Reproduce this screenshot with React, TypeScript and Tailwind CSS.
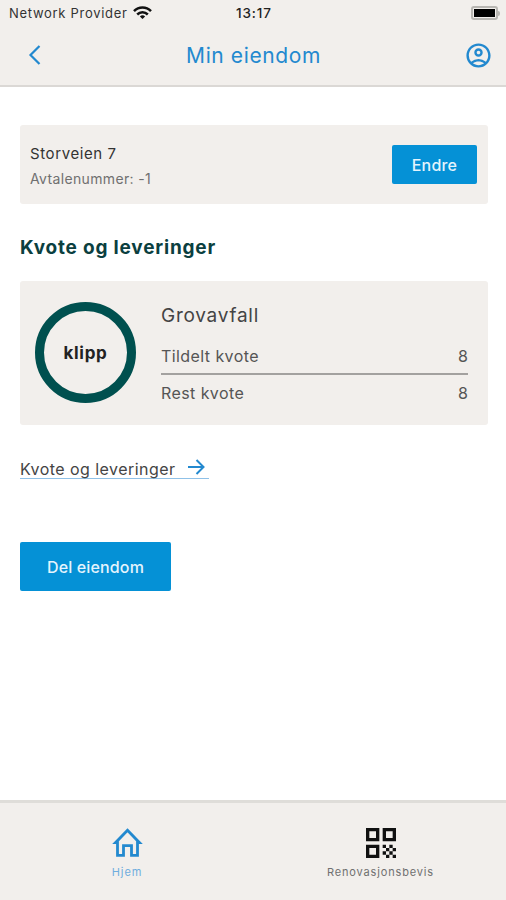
import { MdOutlineAccountCircle, MdQrCode } from "react-icons/md";

const StatusBar = () => {
  return (
    <div className="grid h-[28px] grid-cols-3 items-center pl-[9px] pr-[6px] text-[13px] text-[#333]">
      <div className="flex items-center gap-[5px]">
        <span className="whitespace-nowrap tracking-[0.7px]">Network Provider</span>
        <svg viewBox="0 0 19 13" className="mb-[3px] h-[13px] w-[19px] shrink-0" fill="none" stroke="#111" strokeWidth="2.5">
          <path d="M1 5.1C5.8.2 13.2.2 18 5.1" />
          <path d="M4.2 8.5c3-3 7.6-3 10.6 0" />
          <path d="M9.5 13 6.9 10.4c1.5-1.4 3.7-1.4 5.2 0z" fill="#111" stroke="none" />
        </svg>
      </div>
      <span className="pb-[2px] pr-px text-center text-[13.5px] font-medium tracking-[0.9px] text-[#222]">13:17</span>
      <div className="mb-[2px] flex items-center justify-end">
        <div className="h-[14px] w-[27px] rounded-[3px] border-2 border-[#b8b6b2] p-px">
          <div className="h-full bg-black"></div>
        </div>
        <div className="h-[5px] w-[2px] rounded-r-full bg-[#b8b6b2]"></div>
      </div>
    </div>
  );
};

const Header = () => {
  return (
    <header className="h-[87px] border-b-2 border-[#dbd8d5] bg-[#f2efec]">
      <StatusBar />
      <div className="flex h-[54px] items-center justify-between pl-[28px] pr-[13px] text-[#2389cf]">
        <svg viewBox="0 0 13 20" className="h-5 w-[13px]" fill="none" stroke="currentColor" strokeWidth="2.2">
          <path d="M11.5 1 2.5 10l9 9" />
        </svg>
        <h1 className="pl-[2px] pt-px text-[21px] tracking-[0.6px]">Min eiendom</h1>
        <MdOutlineAccountCircle className="h-[29px] w-[29px]" />
      </div>
    </header>
  );
};

const QuotaRow = ({ label, value }: { label: string; value: number }) => {
  return (
    <div className="flex justify-between text-base leading-6 text-[#555]">
      <span className="tracking-[0.42px]">{label}</span>
      <span>{value}</span>
    </div>
  );
};

const App = () => {
  return (
    <div className="flex h-[900px] w-[506px] flex-col overflow-hidden bg-white font-['Inter',sans-serif]">
      <Header />
      <main className="flex flex-1 flex-col items-start px-5 pr-[18px] pt-[38px]">
        <section className="flex h-[79px] w-full items-center justify-between rounded-[3px] bg-[#f2efec] pl-[10px] pr-[11px]">
          <div className="pt-[2px]">
            <p className="text-[15px] leading-[25px] tracking-[0.6px] text-[#333]">Storveien 7</p>
            <p className="text-[14px] leading-[25px] tracking-[0.35px] text-[#707070]">Avtalenummer: -1</p>
          </div>
          <button className="h-[39px] w-[85px] rounded-[2px] bg-[#0591d6] text-base font-medium tracking-[0.2px] text-[#e4f4fd]">
            Endre
          </button>
        </section>

        <h2 className="mt-[30px] text-[19px] font-bold leading-7 tracking-[0.8px] text-[#0b3f40]">
          Kvote og leveringer
        </h2>

        <section className="mt-[19px] flex h-[144px] w-full rounded-[3px] bg-[#f2efec] pl-[15px] pr-5">
          <div className="mt-[21px] flex h-[101px] w-[101px] shrink-0 items-center justify-center rounded-full border-[9px] border-[#00504f] pt-[2px] text-[17px] font-bold tracking-[0.7px] text-[#222]">
            klipp
          </div>
          <div className="ml-[25px] flex-1 pt-[21px]">
            <h3 className="text-[19px] leading-7 tracking-[0.75px] text-[#444]">Grovavfall</h3>
            <div className="mt-[14px] border-b-2 border-[#a3a19f] pb-[5px]">
              <QuotaRow label="Tildelt kvote" value={8} />
            </div>
            <div className="mt-[6px]">
              <QuotaRow label="Rest kvote" value={8} />
            </div>
          </div>
        </section>

        <a className="mt-[31px] flex h-[23px] items-center gap-[13px] border-b border-[#8fc1e8] pr-1">
          <span className="mt-[3px] text-base tracking-[0.45px] text-[#444]">Kvote og leveringer</span>
          <svg viewBox="0 0 17 16" className="mb-px h-4 w-[17px]" fill="none" stroke="#2389cf" strokeWidth="2">
            <path d="M0 8h15M8.5 1l7 7-7 7" />
          </svg>
        </a>

        <button className="mt-[63px] h-[49px] w-[151px] rounded-[2px] bg-[#0591d6] text-base font-medium tracking-[0.15px] text-[#e4f4fd]">
          Del eiendom
        </button>
      </main>

      <nav className="grid h-[100px] grid-cols-2 border-t-[3px] border-[#dfddd9] bg-[#f2efec]">
        <a className="flex flex-col items-center pl-px pt-[25px] text-[#2389cf]">
          <svg viewBox="0 0 31 29" className="h-[29px] w-[31px]" fill="none" stroke="currentColor" strokeWidth="2.8">
            <path d="M3.5 14.7h2v12.6h6v-9.6h8v9.6h6V14.7h2L15.5 2.2z" />
          </svg>
          <span className="mt-[7px] text-[11px] leading-4 tracking-[0.9px] text-[#6fadde]">Hjem</span>
        </a>
        <a className="flex flex-col items-center pl-[2px] pt-5 text-[#111]">
          <MdQrCode className="h-10 w-10" />
          <span className="mt-px text-[11px] leading-4 tracking-[0.85px] text-[#707070]">Renovasjonsbevis</span>
        </a>
      </nav>
    </div>
  );
};

export default App;
